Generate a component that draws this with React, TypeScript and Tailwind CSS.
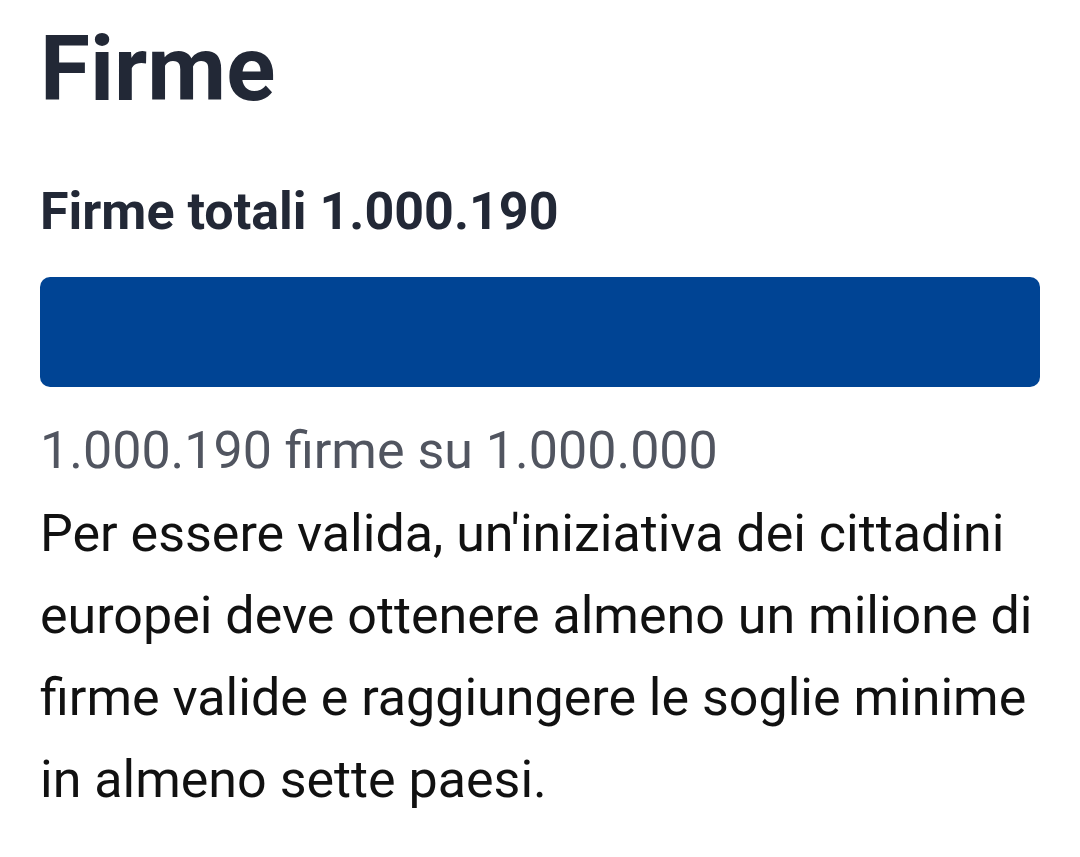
export default function App() {
  return (
    <div className="min-h-screen bg-white px-10 pt-[15px] font-['Roboto',sans-serif]">
      <h1 className="text-[91px] leading-[109px] font-bold text-[#222836]">Firme</h1>

      <h2 className="mt-[57px] text-[52px] leading-[62px] font-bold text-[#222836]">
        Firme totali 1.000.190
      </h2>

      {/* progress bar, full */}
      <div className="mt-[34px] h-[110px] w-full overflow-hidden rounded-[10px] bg-[#e5e7eb]">
        <div className="h-full bg-[#004494]" style={{ width: "100%" }} />
      </div>

      <p className="mt-[34px] text-[52px] leading-[60px] text-[#515560]">
        1.000.190 firme su 1.000.000
      </p>

      <p className="mt-[12px] text-[52px] leading-[82px] text-[#111111]">
        Per essere valida, un'iniziativa dei cittadini europei deve ottenere almeno un milione di
        firme valide e raggiungere le soglie minime in almeno sette paesi.
      </p>
    </div>
  );
}
